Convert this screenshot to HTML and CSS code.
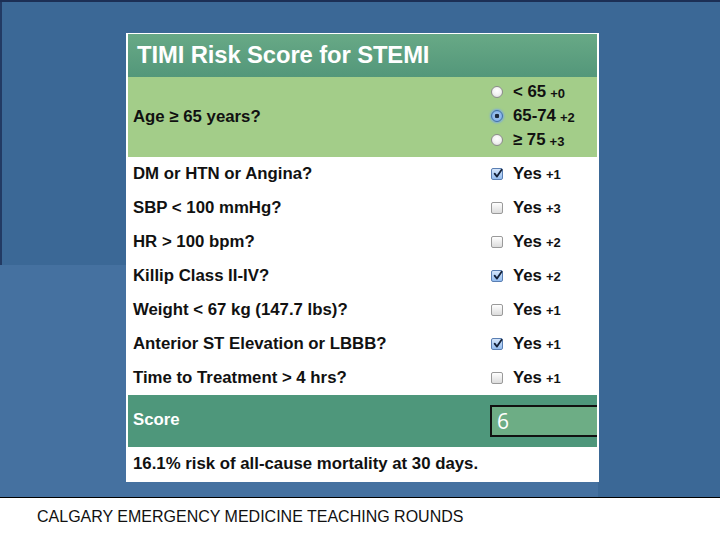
FILE: index.html
```html
<!DOCTYPE html>
<html>
<head>
<meta charset="utf-8">
<title>TIMI Risk Score for STEMI</title>
<link rel="stylesheet" href="styles.css">
</head>
<body>
<div class="slide">
  <div class="card">
    <div class="title">TIMI Risk Score for STEMI</div>
    <div class="row age">
      <div class="label">Age ≥ 65 years?</div>
      <div class="radios">
        <div class="opt"><span class="radio"></span><span class="val">&lt; 65</span><span class="pts">+0</span></div>
        <div class="opt"><span class="radio on"></span><span class="val">65-74</span><span class="pts">+2</span></div>
        <div class="opt"><span class="radio"></span><span class="val">≥ 75</span><span class="pts">+3</span></div>
      </div>
    </div>
    <div class="row"><div class="label">DM or HTN or Angina?</div><div class="ctrl"><span class="cb on"><svg viewBox="0 0 12 12"><path d="M2.6 5.6 L5 8.6 L9.6 1.8"/></svg></span><span class="val">Yes</span><span class="pts">+1</span></div></div>
    <div class="row"><div class="label">SBP &lt; 100 mmHg?</div><div class="ctrl"><span class="cb"></span><span class="val">Yes</span><span class="pts">+3</span></div></div>
    <div class="row"><div class="label">HR &gt; 100 bpm?</div><div class="ctrl"><span class="cb"></span><span class="val">Yes</span><span class="pts">+2</span></div></div>
    <div class="row"><div class="label">Killip Class II-IV?</div><div class="ctrl"><span class="cb on"><svg viewBox="0 0 12 12"><path d="M2.6 5.6 L5 8.6 L9.6 1.8"/></svg></span><span class="val">Yes</span><span class="pts">+2</span></div></div>
    <div class="row"><div class="label">Weight &lt; 67 kg (147.7 lbs)?</div><div class="ctrl"><span class="cb"></span><span class="val">Yes</span><span class="pts">+1</span></div></div>
    <div class="row"><div class="label">Anterior ST Elevation or LBBB?</div><div class="ctrl"><span class="cb on"><svg viewBox="0 0 12 12"><path d="M2.6 5.6 L5 8.6 L9.6 1.8"/></svg></span><span class="val">Yes</span><span class="pts">+1</span></div></div>
    <div class="row"><div class="label">Time to Treatment &gt; 4 hrs?</div><div class="ctrl"><span class="cb"></span><span class="val">Yes</span><span class="pts">+1</span></div></div>
    <div class="row score"><div class="label">Score</div><div class="scorebox">6</div></div>
    <div class="row result"><div class="label">16.1% risk of all-cause mortality at 30 days.</div></div>
  </div>
</div>
<div class="footer">CALGARY EMERGENCY MEDICINE TEACHING ROUNDS</div>
</body>
</html>
```

FILE: styles.css
```css
html, body {
  margin: 0;
  padding: 0;
  background: #ffffff;
}

.slide {
  height: 464px;
  padding-top: 31px;
  border-top: 2px solid #1c2f55;
  border-bottom: 1px solid #000000;
  background-color: #3b6896;
  background-image:
    linear-gradient(#223a63, #223a63),
    linear-gradient(#4571a0, #4571a0);
  background-repeat: no-repeat;
  background-size: 2px 263px, 598px 232px;
  background-position: 0 0, 0 263px;
  font-family: "Liberation Sans", Arial, sans-serif;
}

.card {
  margin-left: 126px;
  width: 469px;
  border: 2px solid #ffffff;
  border-top-width: 1px;
  background: #ffffff;
  overflow: hidden;
}

.title {
  height: 43px;
  line-height: 41px;
  padding-left: 9px;
  color: #ffffff;
  font-weight: bold;
  font-size: 23.8px;
  letter-spacing: -0.1px;
  background: linear-gradient(#68a986, #53977a);
}

.row {
  display: grid;
  grid-template-columns: 362px 1fr;
  align-items: center;
  height: 34px;
  color: #111111;
}

.label {
  padding-left: 5px;
  font-weight: bold;
  font-size: 16.8px;
  white-space: nowrap;
}

.age {
  height: 80px;
  background: #a3cd89;
}

.radios {
  display: flex;
  flex-direction: column;
  gap: 4px;
  margin-top: -2px;
}

.opt, .ctrl {
  display: flex;
  align-items: center;
  height: 20px;
  font-weight: bold;
}

.ctrl {
  margin-top: -1px;
}

.val {
  font-size: 16.8px;
  margin-right: 4px;
}

.pts {
  font-size: 13px;
  margin-top: 2px;
}

.radio {
  box-sizing: border-box;
  width: 12px;
  height: 12px;
  margin-left: 1px;
  margin-right: 10px;
  border-radius: 50%;
  border: 1px solid #8c8c8c;
  background: radial-gradient(circle at 50% 35%, #ffffff 0%, #f2f2f2 50%, #d6d6d6 100%);
}

.radio.on {
  border-color: #3f6fb0;
  background: radial-gradient(circle, #1d2a3e 0, #1d2a3e 2px, #9cc3ef 2.6px, #6a9fe0 100%);
  box-shadow: 0 0 2px 1px #7aa8e6;
}

.cb {
  box-sizing: border-box;
  width: 12px;
  height: 12px;
  margin-left: 1px;
  margin-right: 10px;
  border-radius: 2px;
  border: 1px solid #9a9a9a;
  background: linear-gradient(#ffffff, #dcdcdc);
  position: relative;
}

.cb.on {
  border-color: #5a7fb3;
  background: linear-gradient(#d4e5fa, #94bdf0);
}

.cb svg {
  position: absolute;
  left: 0;
  top: -1px;
  width: 12px;
  height: 12px;
  overflow: visible;
}

.cb path {
  fill: none;
  stroke: #14223a;
  stroke-width: 1.8;
  stroke-linecap: round;
  stroke-linejoin: round;
}

.score {
  height: 52px;
  background: #4e977b;
}

.score .label {
  color: #ffffff;
  padding-bottom: 2px;
}

.scorebox {
  box-sizing: border-box;
  height: 32px;
  width: 120px;
  border: 2px solid #111111;
  background: #6dad85;
  color: #ffffff;
  font-family: "Open Sans", "DejaVu Sans", sans-serif;
  font-size: 21px;
  line-height: 28px;
  padding-left: 5px;
}

.result {
  height: 33px;
}

.footer {
  padding-left: 37px;
  padding-top: 10px;
  font-family: "Liberation Sans", Arial, sans-serif;
  font-size: 16px;
  color: #111111;
}
```
